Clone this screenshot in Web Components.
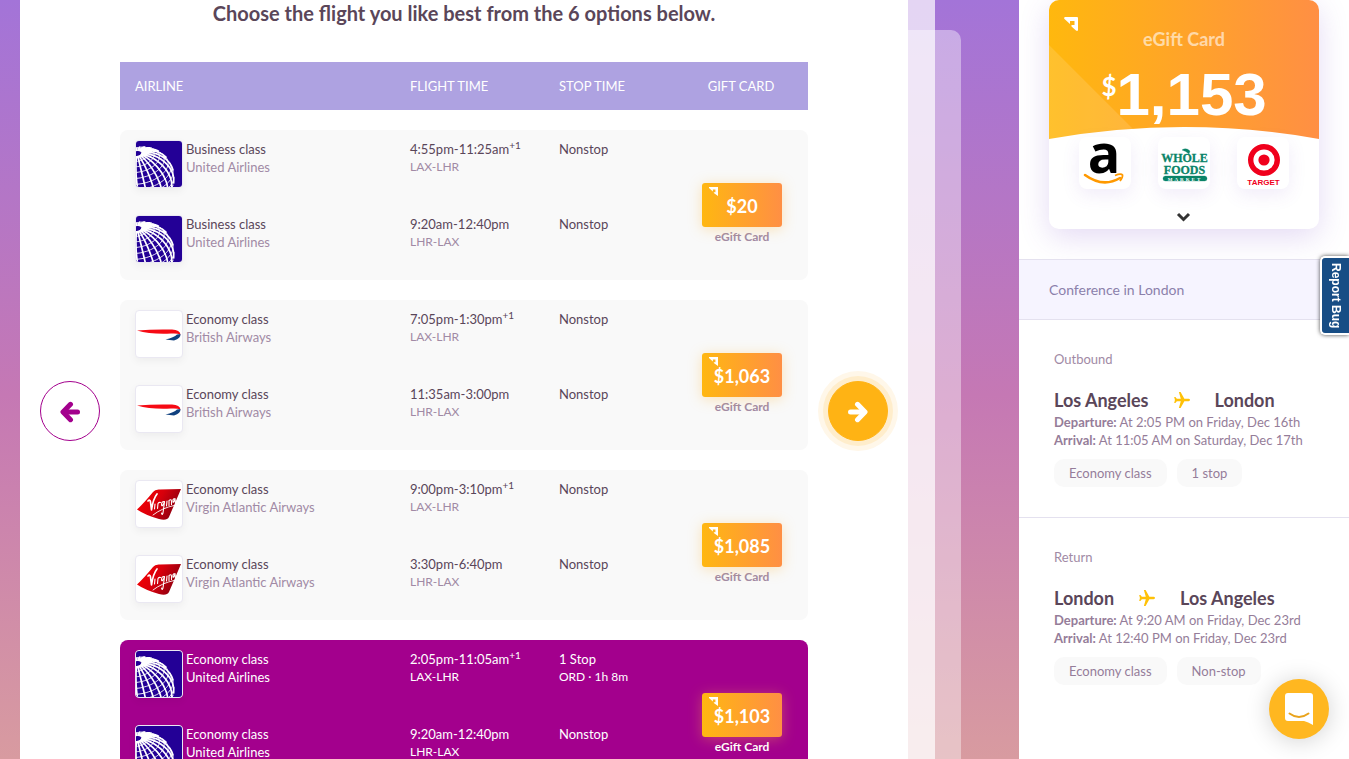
<!DOCTYPE html>
<html lang="en">
<head>
<meta charset="utf-8">
<title>Choose your flight</title>
<style>
html, body { margin: 0; height: 100%; }
body { font-family: Lato, "Liberation Sans", sans-serif; font-size: 13px; line-height: 18px; color: #5a4659; }
</style>
</head>
<body>
<trip-app></trip-app>

<template id="t-app">
<style>
:host { display: grid; grid-template-columns: minmax(0, 1fr) 330px; height: 100vh; overflow: hidden;
  background: linear-gradient(#a374d8 0%, #c578b4 52%, #d89ba0 100%); }
main { display: flex; overflow: hidden; padding: 0 111px 0 20px; }
flight-panel { flex: 1; min-width: 0; }
</style>
<main><flight-panel></flight-panel></main>
<trip-sidebar></trip-sidebar>
<report-tab></report-tab>
<chat-launcher></chat-launcher>
</template>

<template id="t-panel">
<style>
:host { display: block; position: relative; }
.layer { position: absolute; left: 100%; bottom: 0; background: #fff; }
.l1 { top: 0; width: 27px; opacity: .7; }
.l2 { top: 30px; width: 53px; opacity: .4; border-radius: 0 10px 0 0; }
.panel { display: grid; grid-template-columns: 60px minmax(0, 1fr) 60px; gap: 20px; padding: 0 20px; height: 100%; box-sizing: border-box; background: #fff; }
.nav { padding-top: 381px; }
h1 { margin: 0; padding: 1px 0 37px; font-size: 20px; line-height: 24px; font-weight: 700; text-align: center; }
.head { display: grid; grid-template-columns: 275px 149px minmax(0, 1fr) 104px; height: 48px; align-items: center; padding: 0 15px; background: #aea2e1; color: #fff; margin-bottom: 20px; box-sizing: border-box; }
.head span:last-child { text-align: center; }
.list { display: grid; gap: 20px; }
</style>
<div class="layer l2"></div><div class="layer l1"></div>
<div class="panel">
  <div class="nav"><round-arrow kind="prev"></round-arrow></div>
  <section>
    <h1>Choose the flight you like best from the 6 options below.</h1>
    <div class="head"><span>AIRLINE</span><span>FLIGHT TIME</span><span>STOP TIME</span><span>GIFT CARD</span></div>
    <div class="list"></div>
  </section>
  <div class="nav"><round-arrow kind="next"></round-arrow></div>
</div>
</template>

<template id="t-arrow">
<style>
:host { display: block; }
button { display: grid; place-items: center; width: 60px; height: 60px; padding: 2px 0 0; border-radius: 50%; border: 1px solid #a3008d; background: #fff; color: #a3008d; cursor: pointer; box-sizing: border-box; }
:host([kind="next"]) button { border-color: #ffb314; background: #ffb314; color: #fff; box-shadow: 0 0 0 5px #ffedcb, 0 0 0 10px #fff7e9; }
:host([kind="next"]) svg { transform: scaleX(-1); }
svg { width: 20px; height: 22px; display: block; }
</style>
<button type="button"><svg viewBox="0 0 20 22" fill="none" stroke="currentColor" stroke-width="5" stroke-linecap="round" stroke-linejoin="round"><path d="M10.5 3.3 3 11l7.500 7.700"/><path d="M4 11H17.500"/></svg></button>
</template>

<template id="t-option">
<style>
:host { display: grid; grid-template-columns: minmax(0, 1fr) 132px; height: 150px; border-radius: 8px; background: #f9f9f9; box-sizing: border-box; }
:host([selected]) { background: #a3008d; --strong: #fff; --soft: #fff; }
.legs { display: grid; grid-template-rows: 75px 75px; padding-left: 15px; }
.gift { display: grid; justify-items: center; align-content: start; padding-top: 53px; font-size: 12px; line-height: 16px; font-weight: 700; color: var(--soft, #a18aa5); row-gap: 2px; }
</style>
<div class="legs"></div>
<div class="gift"><gift-chip></gift-chip><span>eGift Card</span></div>
</template>

<template id="t-leg">
<style>
:host { display: grid; grid-template-columns: 51px 224px 149px minmax(0, 1fr); align-content: start; padding-top: 10px; color: var(--strong, #5a4659); }
p { margin: 0; white-space: nowrap; }
.soft { color: var(--soft, #a18aa5); }
small { font-size: 12px; display: block; }
sup { font-size: 10px; line-height: 0; vertical-align: 5px; }
</style>
<div class="logo"></div>
<div><p class="cls"></p><p class="soft air"></p></div>
<div><p class="time"></p><small class="soft route"></small></div>
<div><p class="stop"></p><small class="soft via"></small></div>
</template>

<template id="t-gift">
<style>
:host { display: grid; position: relative; place-items: center; width: 80px; height: 44px; border-radius: 3px; background: linear-gradient(90deg, #ffb711, #ff8f44); box-shadow: 0 2px 14px rgba(255, 183, 60, .35); color: #fff; font-size: 18px; line-height: 22px; font-weight: 700; padding-top: 2px; box-sizing: border-box; }
svg { position: absolute; left: 7px; top: 4px; width: 9px; height: 9px; }
</style>
<svg viewBox="0 0 14 14" fill="#fff"><path d="M0 0H14V14L7.500 9.500 7.500 8H10V4H6V7L0 1.500Z"/></svg><slot></slot>
</template>

<template id="t-sidebar">
<style>
:host { display: block; background: #fff; overflow: hidden; }
.top { padding: 0 30px 30px; }
.trip { margin: 0; padding: 20px 30px; border: solid #e4e1ef; border-width: 1px 0; background: #f6f4ff; color: #8b80ab; font-size: 14px; line-height: 19px; font-weight: 400; }
</style>
<div class="top"><gift-summary></gift-summary></div>
<h2 class="trip">Conference in London</h2>
<trip-leg label="Outbound" from="Los Angeles" to="London" dep="At 2:05 PM on Friday, Dec 16th" arr="At 11:05 AM on Saturday, Dec 17th" stops="1 stop"></trip-leg>
<trip-leg label="Return" from="London" to="Los Angeles" dep="At 9:20 AM on Friday, Dec 23rd" arr="At 12:40 PM on Friday, Dec 23rd" stops="Non-stop"></trip-leg>
</template>

<template id="t-summary">
<style>
:host { display: block; height: 229px; border-radius: 10px; overflow: hidden; background: #fff; box-shadow: 0 8px 30px rgba(120, 70, 200, .2); }
.hero { position: relative; height: 139px; background: linear-gradient(90deg, #ffb80e, #ff8f44); color: #fff; text-align: center; }
.bg { position: absolute; inset: 0; width: 100%; height: 100%; }
.mark { position: absolute; left: 15px; top: 17px; width: 14px; height: 14px; }
.label { position: relative; padding-top: 28px; font-size: 18px; line-height: 22px; font-weight: 700; color: rgba(255, 255, 255, .6); }
.sum { position: relative; display: flex; justify-content: center; align-items: flex-start; margin-top: 12px; font: 700 60px/66px "Liberation Sans", Arial, sans-serif; }
.sum span { font: 700 26px/30px Lato, sans-serif; padding-top: 9px; }
.stores { position: relative; display: flex; justify-content: space-between; padding: 0 30px; margin-top: -2px; }
.stores svg { display: block; width: 52px; height: 52px; border-radius: 8px; background: #fff; box-shadow: 0 6px 18px rgba(120, 70, 200, .1); overflow: visible; }
button { display: block; margin: 20px auto 0; border: 0; padding: 0; background: none; width: 16px; height: 16px; }
button svg { display: block; width: 16px; height: 16px; }
</style>
<div class="hero">
  <svg class="bg" viewBox="0 0 270 139" preserveAspectRatio="none"><path d="M0 45 94 139H0Z" fill="#fff" opacity=".13"/><path d="M0 139Q135 115 270 139Z" fill="#fff"/></svg>
  <svg class="mark" viewBox="0 0 14 14" fill="#fff"><path d="M1 0H13Q14 0 14 1V13Q13.500 14.500 12 13.500L7.500 9.500V8H10.500V4H6V7L.5 2Q-.5.5 1 0Z"/></svg>
  <div class="label">eGift Card</div>
  <div class="sum"><span>$</span>1,153</div>
</div>
<div class="stores">
  <svg viewBox="0 0 52 52" role="img" aria-label="Amazon"><text x="25" y="36" text-anchor="middle" font-family="Open Sans" font-weight="700" font-size="54">a</text><path d="M6 38Q24 51 41 41" fill="none" stroke="#ff9900" stroke-width="2.600" stroke-linecap="round"/><path d="M36 38.500Q42 36 43.500 38 44 40 41 44" fill="none" stroke="#ff9900" stroke-width="1.800"/></svg>
  <svg viewBox="0 0 52 52" role="img" aria-label="Whole Foods Market"><g fill="#0a8468" stroke="#0a8468" stroke-width=".3" font-family="Liberation Serif" font-weight="700" text-anchor="middle"><text x="26.500" y="25" font-size="12">WHOLE</text><text x="26.500" y="37" font-size="12">FOODS</text><rect x="5" y="39" width="44" height="5" rx="2.500"/><text x="27" y="43.500" font-size="5" fill="#fff" stroke="none" letter-spacing="2">MARKET</text><path d="M24 13Q28 10 32 14L31 17Q28 14 24 13Z"/></g></svg>
  <svg viewBox="0 0 52 52" role="img" aria-label="Target"><circle cx="27" cy="23" r="13.300" fill="none" stroke="#f0001c" stroke-width="5.400"/><circle cx="27" cy="23" r="5.600" fill="#f0001c"/><text x="26.500" y="47.500" text-anchor="middle" font-family="Liberation Sans" font-weight="700" font-size="8" fill="#f0001c">TARGET</text></svg>
</div>
<button type="button" aria-label="Show more stores"><svg viewBox="0 0 16 16" fill="none" stroke="#333" stroke-width="3"><path d="M2 5 7.500 10.500 13 5"/></svg></button>
</template>

<template id="t-trip">
<style>
:host { display: block; padding: 30px 35px; border-bottom: 1px solid #e4e1ef; color: #957d99; }
:host(:last-of-type) { border-bottom: 0; }
.label { color: #a18aa5; }
h3 { display: flex; align-items: center; gap: 25px; margin: 21px 0 2px; font-size: 18px; line-height: 22px; font-weight: 700; color: #5a4659; }
h3 svg { width: 16px; height: 16px; }
p { margin: 0; white-space: nowrap; }
.tags { display: flex; gap: 10px; margin-top: 10px; }
.tags span { padding: 5px 15px; border-radius: 10px; background: #f9f9f9; }
</style>
<div class="label"></div>
<h3><span class="from"></span><svg viewBox="0 0 17 17" fill="#ffc107"><path d="M17 8.500Q17 9.600 15.500 9.700H11L7 17H5.200L7.200 9.700H3L1.500 11.800H.2L1 8.500.2 5.200H1.500L3 7.300H7.200L5.200 0H7L11 7.300H15.500Q17 7.400 17 8.500Z"/></svg><span class="to"></span></h3>
<p><b>Departure:</b> <span class="dep"></span></p>
<p><b>Arrival:</b> <span class="arr"></span></p>
<div class="tags"><span>Economy class</span><span class="stops"></span></div>
</template>

<template id="t-report">
<style>
:host { position: fixed; right: 0; top: 256px; z-index: 5; }
button { display: block; box-sizing: border-box; width: 29px; height: 79px; padding: 0; border: 2px solid #fff; border-right: 0; border-radius: 5px 0 0 5px; background: #174d85; color: #fff; font: 700 12px/27px "Liberation Sans", Arial, sans-serif; writing-mode: vertical-rl; text-align: center; box-shadow: 0 0 4px rgba(0, 0, 0, .7); }
</style>
<button type="button">Report Bug</button>
</template>

<template id="t-chat">
<style>
:host { position: fixed; right: 20px; bottom: 20px; z-index: 5; }
button { display: grid; place-items: center; width: 60px; height: 60px; padding: 0; border: 0; border-radius: 50%; background: #ffb720; box-shadow: 0 2px 24px rgba(0, 0, 0, .18); }
svg { width: 28px; height: 32px; }
</style>
<button type="button" aria-label="Open chat"><svg viewBox="0 0 28 32"><path d="M3 0H25Q28 0 28 3V32Q23 29 19 28H3Q0 28 0 25V3Q0 0 3 0Z" fill="#fff"/><path d="M4.500 20.500Q14 27.500 23.500 20.500" fill="none" stroke="#e9a31c" stroke-width="2" stroke-linecap="round"/></svg></button>
</template>

<template id="t-logo">
<style>
:host { display: block; box-sizing: border-box; width: 48px; height: 48px; border: 1px solid #eae8f2; border-radius: 4px; overflow: hidden; background: #fff; box-shadow: 0 3px 8px rgba(0, 0, 0, .05); }
svg { display: block; width: 46px; height: 46px; }
</style>
</template>

<script>
// Globe grid: meridians and parallels of a tilted sphere, in a 46 x 46 box.
const globe = () => {
  const P = [-0.19, 0.8, 0.57], A = [0.973, 0.23, 0], B = [-0.131, 0.555, -0.821];
  const line = (steps, at) => {
    let d = "", pen = false;
    for (let i = 0; i <= steps; i++) {
      const [phi, th] = at(i / steps).map(v => v * Math.PI / 180);
      const v = P.map((p, k) => Math.cos(phi) * p + Math.sin(phi) * (Math.cos(th) * A[k] + Math.sin(th) * B[k]));
      if (v[2] < 0) { pen = false; continue; }
      d += (pen ? "L" : "M") + (7 + 31 * v[0]).toFixed(1) + " " + (37 - 31 * v[1]).toFixed(1);
      pen = true;
    }
    return d;
  };
  let wide = "", thin = "";
  for (let th = 0; th < 360; th += 15) wide += line(40, t => [8 + t * 130, th]);
  for (let phi = 10; phi < 140; phi += 11) thin += line(80, t => [phi, t * 360]);
  return `<path d="${wide}" stroke-width="1.700"/><path d="${thin}" stroke-width=".9"/>`;
};
const logos = {
  "United Airlines": `<svg viewBox="0 0 46 46" role="img" aria-label="United Airlines"><rect width="46" height="46" fill="#230096"/><g fill="none" stroke="#fff">${globe()}</g></svg>`,
  "British Airways": `<svg viewBox="0 0 46 46" role="img" aria-label="British Airways"><path d="M1 19.500Q18 18 36 18.500 44 19 44.500 23.500 41 22 35 22.500 15 23.500 1 19.500Z" fill="#f60a14"/><path d="M44.500 23Q45 27 38 29.500L29.500 28.500Q38 26.500 41 23.500Z" fill="#10417f"/></svg>`,
  "Virgin Atlantic Airways": `<svg viewBox="0 0 46 46" role="img" aria-label="Virgin Atlantic Airways"><defs><linearGradient id="v" x1="0" x2="1" y2=".4"><stop offset="0" stop-color="#f00"/><stop offset=".55" stop-color="#d8000c"/><stop offset="1" stop-color="#900010"/></linearGradient></defs><path d="M1 28.500Q8 22 17 11 19 8 24 8.500L45 8 33 36Q31 40 23 38 9 34 1 28.500Z" fill="url(#v)"/><g fill="none" stroke="#fff" stroke-linecap="round" stroke-linejoin="round"><path d="M12 20Q14 18 14.500 21L15.500 29Q17 18 21 13" stroke-width="1.700"/><path d="M19 23 18.500 28M21.500 27.500 22 22.500Q23 21 24.500 21.500M28.500 20.500Q25.500 20 25.500 24 26 26.500 28.500 21L27 32Q26 35 25.500 32M31 20 30.500 25M33 24.500 33 19.500Q35.500 17.500 35.500 20.500L35.500 23.500M39 17.500Q36.500 17.500 37 21 38 22 39 17.500L39.500 22" stroke-width="1.100"/><path d="M17 34Q26 27 38 24.500" stroke-width=".9"/></g></svg>`
};
const define = (name, id, setup) => customElements.define(name, class extends HTMLElement {
  connectedCallback() {
    if (this.shadowRoot) return;
    const root = this.attachShadow({ mode: "open" });
    root.append(document.getElementById(id).content.cloneNode(true));
    if (setup) setup(this, root);
  }
});
const fill = (root, map) => Object.entries(map).forEach(([k, v]) => { root.querySelector("." + k).textContent = v; });

const U = "United Airlines", B = "British Airways", V = "Virgin Atlantic Airways";
const options = [
  { price: "$20", cls: "Business class", air: U, legs: [["4:55pm-11:25am", 1, "LAX-LHR", "Nonstop"], ["9:20am-12:40pm", 0, "LHR-LAX", "Nonstop"]] },
  { price: "$1,063", cls: "Economy class", air: B, legs: [["7:05pm-1:30pm", 1, "LAX-LHR", "Nonstop"], ["11:35am-3:00pm", 0, "LHR-LAX", "Nonstop"]] },
  { price: "$1,085", cls: "Economy class", air: V, legs: [["9:00pm-3:10pm", 1, "LAX-LHR", "Nonstop"], ["3:30pm-6:40pm", 0, "LHR-LAX", "Nonstop"]] },
  { price: "$1,103", cls: "Economy class", air: U, selected: true, legs: [["2:05pm-11:05am", 1, "LAX-LHR", "1 Stop", "ORD · 1h 8m"], ["9:20am-12:40pm", 0, "LHR-LAX", "Nonstop"]] }
];

define("airline-logo", "t-logo", (el, root) => root.append(document.createRange().createContextualFragment(logos[el.getAttribute("name")])));
define("gift-chip", "t-gift");
define("round-arrow", "t-arrow", (el, root) => root.querySelector("button").setAttribute("aria-label", el.getAttribute("kind") === "next" ? "Next" : "Previous"));
define("flight-leg", "t-leg", (el, root) => {
  const { cls, air, leg: [time, plus, route, stop, via = ""] } = el.data;
  const logo = document.createElement("airline-logo");
  logo.setAttribute("name", air);
  root.querySelector(".logo").append(logo);
  fill(root, { cls, air, time, route, stop, via });
  if (plus) { const s = document.createElement("sup"); s.textContent = "+1"; root.querySelector(".time").append(s); }
});
define("flight-option", "t-option", (el, root) => {
  root.querySelector("gift-chip").textContent = el.data.price;
  el.data.legs.forEach(leg => {
    const n = document.createElement("flight-leg");
    n.data = { cls: el.data.cls, air: el.data.air, leg };
    root.querySelector(".legs").append(n);
  });
});
define("flight-panel", "t-panel", (el, root) => options.forEach(o => {
  const n = document.createElement("flight-option");
  n.data = o;
  n.toggleAttribute("selected", !!o.selected);
  root.querySelector(".list").append(n);
}));
define("gift-summary", "t-summary");
define("trip-leg", "t-trip", (el, root) => fill(root, Object.fromEntries(["label", "from", "to", "dep", "arr", "stops"].map(k => [k, el.getAttribute(k)]))));
define("trip-sidebar", "t-sidebar");
define("report-tab", "t-report");
define("chat-launcher", "t-chat");
define("trip-app", "t-app");
</script>
</body>
</html>
